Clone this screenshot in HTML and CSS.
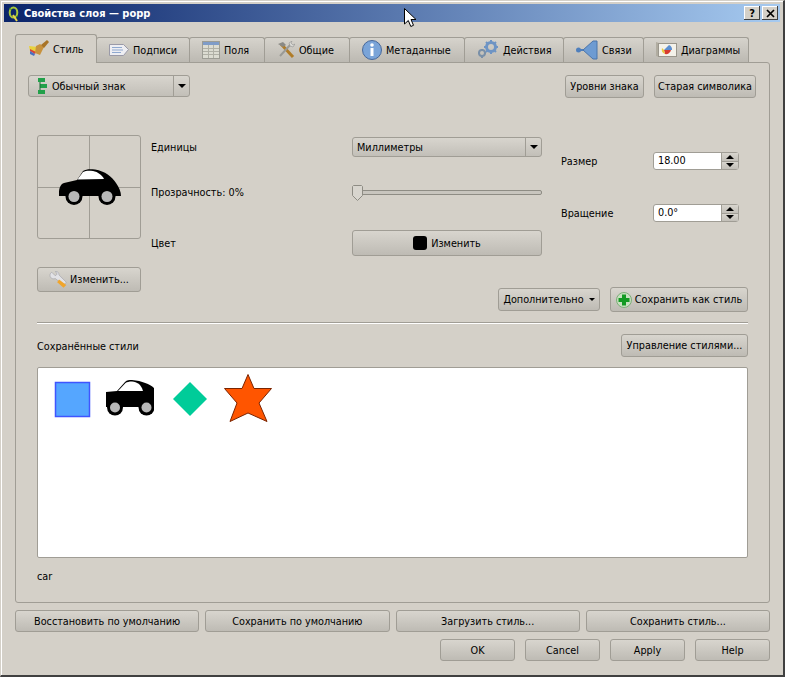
FILE: index.html
```html
<!DOCTYPE html>
<html lang="ru">
<head>
<meta charset="utf-8">
<title>Свойства слоя — popp</title>
<link rel="stylesheet" href="styles.css">
</head>
<body>
<svg class="defs" width="0" height="0">
  <symbol id="car" viewBox="0 0 62 36" preserveAspectRatio="none">
    <path d="M0 27C-.5 21 1 15 5 14L18 11L24 2C27 0 31 0 36 .5C46 2 53 8 57 14C60 18 62 23 62 27Z" fill="#000"/>
    <path d="M18.500 10.500L24 3C27 1.500 30 1.500 34 2C39 3 43 6 45 10Z" fill="#fff"/>
    <circle cx="15" cy="27.500" r="8.500" fill="#000"/><circle cx="15" cy="27.500" r="5.500" fill="#b8b8b8"/>
    <circle cx="48" cy="27.500" r="8.500" fill="#000"/><circle cx="48" cy="27.500" r="5.500" fill="#b8b8b8"/>
  </symbol>
  <symbol id="car-small" viewBox="0 0 48 36">
    <path d="M0 12L11 11L19 2C21 0 23 0 26 0C36 1 44 4 48 8L48 27L0 27Z" fill="#000"/>
    <path d="M12 11L19.500 3C21 2 23 1.500 26 1.500C31 2 35 4 37 11Z" fill="#fff"/>
    <circle cx="9" cy="27.500" r="8" fill="#000"/><circle cx="9" cy="27.500" r="5" fill="#b8b8b8"/>
    <circle cx="40.500" cy="27.500" r="8" fill="#000"/><circle cx="40.500" cy="27.500" r="5" fill="#b8b8b8"/>
  </symbol>
</svg>
<div class="window">
  <header class="titlebar">
    <svg class="logo" width="11" height="17" viewBox="0 0 11 17"><ellipse cx="5.500" cy="7.500" rx="3.800" ry="5" fill="none" stroke="#a8c83c" stroke-width="2"/><path d="M5 10l4 6" stroke="#e8d44a" stroke-width="2"/><path d="M1 3l3 2M8 12l2-1" stroke="#2f7d2a"/></svg>
    <span class="title">Свойства слоя — popp</span>
    <span class="winbtns">
      <span class="winbtn">?</span>
      <span class="winbtn">
        <svg width="9" height="9" viewBox="0 0 9 9"><path d="M1 1l7 7M8 1l-7 7" stroke="#000" stroke-width="1.7"/></svg>
      </span>
    </span>
  </header>

  <nav class="tabs">
    <div class="tab active">
      <svg class="ti" width="20" height="18" viewBox="0 0 20 18"><path d="M0 6l9 1-2 6-6-2z" fill="#e8d23c"/><path d="M1 9l6 3-1 2-5-3z" fill="#d8433a"/><path d="M1 11l5 3-1 2-4-2z" fill="#4a6fc0"/><path d="M7 6l4-2 4 3-4 8-5-2z" fill="#c8923e"/><path d="M12 5l6-5 2 2-5 6z" fill="#a87428"/></svg>
      <span>Стиль</span>
    </div>
    <div class="tab">
      <svg class="ti" width="20" height="14" viewBox="0 0 20 14"><path d="M.5 1.500h14l5 5-5 6H.5z" fill="#eeeef2" stroke="#9a9aa8"/><path d="M3 4.500h10M3 7h11M3 9.500h9" stroke="#8fa9d0"/></svg>
      <span>Подписи</span>
    </div>
    <div class="tab">
      <svg class="ti" width="18" height="18" viewBox="0 0 18 18"><rect x=".5" y=".5" width="17" height="17" fill="#dcdcd2" stroke="#9c9c94"/><rect x="1" y="1" width="16" height="3" fill="#7f9cc8"/><path d="M1 7.500h16M1 10.500h16M1 13.500h16M6.500 4v13M11.500 4v13" stroke="#b0b0a6"/></svg>
      <span>Поля</span>
    </div>
    <div class="tab">
      <svg class="ti" width="18" height="18" viewBox="0 0 18 18"><path d="M4 3l12 13" stroke="#b07c28" stroke-width="3"/><path d="M14 3L3 15" stroke="#9a9a96" stroke-width="2"/><path d="M1 3l5-2 3 3-3 2z" fill="#8a8a86"/><path d="M12 2l3-2-1 2 2 2 2-1-2 3-3-1z" fill="#d8d8d4" stroke="#888" stroke-width=".5"/></svg>
      <span>Общие</span>
    </div>
    <div class="tab">
      <svg class="ti" width="20" height="20" viewBox="0 0 20 20"><circle cx="10" cy="10" r="9.500" fill="#7aa4d8" stroke="#48689a"/><circle cx="10" cy="5" r="1.800" fill="#fff"/><path d="M8.500 8h3v8h-3z" fill="#fff"/></svg>
      <span>Метаданные</span>
    </div>
    <div class="tab">
      <svg class="ti" width="22" height="20" viewBox="0 0 22 20"><circle cx="14" cy="7" r="4.500" fill="none" stroke="#6e94c4" stroke-width="3"/><path d="M14 0v3M14 11v3M7 7h3M18 7h3M9 2l2 2M17 10l2 2M19 2l-2 2M11 10l-2 2" stroke="#6e94c4" stroke-width="2"/><circle cx="5" cy="13" r="3" fill="none" stroke="#7a90a8" stroke-width="2"/><path d="M5 9v1M5 16v2M1 13h1M8 13h1" stroke="#7a90a8" stroke-width="2"/></svg>
      <span>Действия</span>
    </div>
    <div class="tab">
      <svg class="ti" width="22" height="20" viewBox="0 0 22 20"><circle cx="2.500" cy="10" r="2.500" fill="#4f7fbc"/><path d="M4 9h6v2H4z" fill="#4f7fbc"/><path d="M7 10L17 1h4v18h-4z" fill="#6d9bd2" stroke="#4a74aa"/></svg>
      <span>Связи</span>
    </div>
    <div class="tab">
      <svg class="ti" width="21" height="16" viewBox="0 0 21 16"><path d="M0 0l3 1v14l-3-1z" fill="#b0aca0"/><rect x="2.500" y="1.500" width="18" height="13" fill="#f4f2ea" stroke="#9a968c"/><path d="M8 8l5-5a5 5 0 0 1 3 5z" fill="#5c8fd0"/><path d="M8 8h7a5 5 0 0 1-6 4z" fill="#d83a2e"/><path d="M8 8l1 4a5 5 0 0 1-3-6z" fill="#e8c93c"/></svg>
      <span>Диаграммы</span>
    </div>
  </nav>

  <main class="pane">
    <div class="toprow">
      <div class="combo combo-type">
        <span class="combo-text">
          <svg class="ci" width="10" height="16" viewBox="0 0 10 16"><rect x="1" y="0" width="7" height="4" fill="#22a04a"/><rect x="3" y="6" width="7" height="4" fill="#22a04a"/><rect x="1" y="12" width="7" height="4" fill="#22a04a"/><path d="M3 4v8" fill="none" stroke="#1a6a34"/></svg>
          Обычный знак
        </span>
        <span class="combo-arrow"><i class="down"></i></span>
      </div>
      <div class="top-actions">
        <button class="btn btn-levels">Уровни знака</button>
        <button class="btn btn-old">Старая символика</button>
      </div>
    </div>

    <section class="symbol">
      <div class="symbol-left">
        <div class="preview">
          <svg class="preview-car"><use href="#car"/></svg>
        </div>
        <button class="btn btn-edit">
          <svg width="20" height="17" viewBox="0 0 22 18"><path d="M3 1a4 4 0 0 0-1 6c2 2 4 1 5 1l9 7 3-3-8-8c0-2-1-4-4-4l2 3-2 2z" fill="#e2e2e6" stroke="#9a9aa2" stroke-width=".6"/><path d="M11 9l8 6-3 3-7-6z" fill="#f0a52c"/></svg>
          Изменить...
        </button>
      </div>
      <div class="symbol-right">
        <div class="symbol-props">
          <div class="props-main">
            <span class="lbl">Единицы</span>
            <div class="combo combo-units">
              <span class="combo-text">Миллиметры</span>
              <span class="combo-arrow"><i class="down"></i></span>
            </div>
            <span class="lbl">Прозрачность: 0%</span>
            <div class="slider">
              <svg class="thumb" width="11" height="16" viewBox="0 0 11 16"><path d="M1.500.5h8l1 1v9l-5 5-5-5v-9z" fill="#d8d5ce" stroke="#8e8c84"/></svg>
            </div>
            <span class="lbl lbl-color">Цвет</span>
            <button class="btn btn-color"><i class="swatch"></i>Изменить</button>
          </div>
          <div class="props-side">
            <span class="lbl">Размер</span>
            <div class="spin">
              <span class="spin-val">18.00</span>
              <span class="spin-btns"><span class="spin-part"><i class="up"></i></span><span class="spin-part"><i class="down"></i></span></span>
            </div>
            <span class="lbl">Вращение</span>
            <div class="spin">
              <span class="spin-val">0.0°</span>
              <span class="spin-btns"><span class="spin-part"><i class="up"></i></span><span class="spin-part"><i class="down"></i></span></span>
            </div>
          </div>
        </div>
        <div class="symbol-actions">
          <button class="btn btn-more">Дополнительно<i class="down small"></i></button>
          <button class="btn btn-save">
            <svg width="16" height="16" viewBox="0 0 16 16"><circle cx="8" cy="8" r="7.500" fill="#c8e0c0" stroke="#7cae78"/><path d="M6 2.500h4V6h3.500v4H10v3.500H6V10H2.500V6H6z" fill="#129a22"/></svg>
            Сохранить как стиль
          </button>
        </div>
      </div>
    </section>

    <hr class="sep">

    <div class="saved-head">
      <span class="saved-title">Сохранённые стили</span>
      <button class="btn btn-manage">Управление стилями...</button>
    </div>

    <div class="list">
      <svg class="cell" viewBox="0 0 48 48"><rect x="7.500" y="8.500" width="34" height="34" fill="#55a6ff" stroke="#3f55ff" stroke-width="1.500"/></svg>
      <svg class="cell"><use href="#car-small" y="6" width="48" height="36"/></svg>
      <svg class="cell" viewBox="0 0 48 48"><path d="M26 8l17 17-17 17L9 25z" fill="#00cc99"/></svg>
      <svg class="cell cell-star" viewBox="0 0 48 48"><path d="M24 .5L30 14.500H47.500L35 29L43 47.500L24 39L6 47.500L13 29L.5 14.500H18Z" fill="#ff5500" stroke="#7a2400"/></svg>
    </div>

    <div class="caption">car</div>
  </main>

  <div class="btnrow btnrow-wide">
    <button class="btn">Восстановить по умолчанию</button>
    <button class="btn">Сохранить по умолчанию</button>
    <button class="btn">Загрузить стиль...</button>
    <button class="btn">Сохранить стиль...</button>
  </div>
  <div class="btnrow btnrow-dialog">
    <button class="btn">OK</button>
    <button class="btn">Cancel</button>
    <button class="btn">Apply</button>
    <button class="btn">Help</button>
  </div>
</div>
<svg class="cursor" width="13" height="20" viewBox="0 0 13 20"><path d="M.5.500v15.500l3.800-3.500 2.500 6 2.700-1.200-2.500-5.800h5z" fill="#fff" stroke="#000"/></svg>
</body>
</html>
```
FILE: styles.css
```css
* { box-sizing: border-box; }
html, body { margin: 0; padding: 0; }
body {
  width: 785px;
  height: 677px;
  overflow: hidden;
  position: relative;
  background: #d4d0c8;
  font-family: "DejaVu Sans Condensed", "DejaVu Sans", sans-serif;
  font-stretch: condensed;
  font-size: 10.75px;
  color: #000;
}
.defs { position: absolute; }
.window {
  height: 677px;
  padding: 3px 3px 0 4px;
  background: #d4d0c8;
  border-top: 1px solid #d4d0c8;
  border-left: 1px solid #d4d0c8;
  box-shadow: inset 1px 1px 0 #fff;
  border-bottom: 2px solid #404040;
  border-right: 2px solid #404040;
}
.titlebar {
  height: 18px;
  margin-left: -1px;
  display: flex;
  align-items: center;
  background: linear-gradient(90deg, #0a246a, #a6caf0);
  color: #fff;
  font-weight: bold;
  font-size: 11px;
  padding-left: 4px;
}
.logo { margin-right: 5px; margin-top: 1px; }
.title { flex: 1; }
.winbtns { display: flex; gap: 2px; margin-right: 2px; }
.winbtn {
  width: 16px;
  height: 14px;
  background: #d4d0c8;
  color: #000;
  display: flex;
  align-items: center;
  justify-content: center;
  font-size: 11px;
  font-weight: bold;
  box-shadow: inset -1px -1px 0 #404040, inset 1px 1px 0 #fff;
}
.tabs {
  display: grid;
  grid-template-columns: 81px 93px 75px 85px 115px 99px 80px 105px;
  width: max-content;
  margin: 12px 0 0 11px;
  height: 28px;
  align-items: end;
  position: relative;
  z-index: 1;
}
.tab {
  height: 25px;
  display: flex;
  align-items: center;
  gap: 4px;
  padding-left: 12px;
  margin-left: -1px;
  border: 1px solid #a09d95;
  border-bottom: 0;
  border-radius: 3px 3px 0 0;
  background: linear-gradient(#d6d3cc, #bcb9b2);
  white-space: nowrap;
}
.tab.active {
  height: 29px;
  background: #d4d0c8;
  padding-left: 13px;
  margin-bottom: -1px;
}
.ti { flex: none; }
.pane {
  width: 755px;
  height: 541px;
  margin-left: 10px;
  padding: 12px 13px 0 12px;
  border: 1px solid #a09d95;
  border-radius: 0 3px 3px 3px;
}
.btn {
  font: inherit;
  color: #000;
  border: 1px solid #a09d95;
  border-radius: 3px;
  background: linear-gradient(#d8d5ce, #bebbb4);
  padding: 0;
  display: flex;
  align-items: center;
  justify-content: center;
  white-space: nowrap;
}
.toprow { display: flex; justify-content: space-between; align-items: flex-start; }
.top-actions { display: flex; gap: 10px; }
.btn-levels { width: 79px; height: 23px; }
.btn-old { width: 102px; height: 23px; }
.combo {
  display: flex;
  border: 1px solid #a09d95;
  border-radius: 3px;
  background: linear-gradient(#d8d5ce, #c2bfb8);
  height: 21px;
}
.combo-text { flex: 1; display: flex; align-items: center; padding-left: 4px; }
.combo-arrow {
  width: 16px;
  border-left: 1px solid #a09d95;
  display: flex;
  align-items: center;
  justify-content: center;
}
.combo-type { width: 162px; height: 22px; }
.combo-type .combo-text { padding-left: 8px; }
.ci { margin-right: 5px; }
.combo-units { width: 190px; height: 20px; }
.up, .down {
  display: block;
  width: 0;
  height: 0;
  border-left: 4px solid transparent;
  border-right: 4px solid transparent;
}
.down { border-top: 4px solid #000; }
.up { border-bottom: 4px solid #000; }
.symbol { display: flex; margin: 37px 8px 0 9px; }
.symbol-left { width: 104px; flex: none; }
.preview {
  height: 104px;
  border: 1px solid #a09d95;
  border-radius: 3px;
  padding-left: 2px;
  display: flex;
  align-items: center;
  justify-content: center;
  background:
    linear-gradient(#a09d95, #a09d95) center / 100% 1px no-repeat,
    linear-gradient(#a09d95, #a09d95) center / 1px 100% no-repeat;
}
.preview-car { width: 62px; height: 36px; }
.btn-edit { width: 104px; height: 25px; margin-top: 28px; gap: 1px; }
.symbol-right { flex: 1; padding-left: 10px; }
.symbol-props { display: flex; justify-content: space-between; padding-right: 9px; height: 121px; }
.props-main {
  width: 391px;
  display: grid;
  grid-template-columns: 201px 190px;
  grid-template-rows: 45px 48px 26px;
  padding-top: 2px;
  align-items: start;
}
.lbl { line-height: 20px; display: block; padding-top: 1px; }
.lbl-color { line-height: 26px; }
.slider {
  height: 20px;
  position: relative;
  display: flex;
  align-items: center;
}
.slider::before {
  content: "";
  display: block;
  width: 100%;
  height: 3px;
  border: 1px solid #8e8c84;
  border-radius: 2px;
  background: #c8c5be;
}
.thumb { position: absolute; left: 0; top: 3px; }
.btn-color { width: 190px; height: 26px; gap: 4px; }
.swatch { width: 14px; height: 14px; background: #000; border-radius: 3px; display: block; }
.props-side {
  width: 178px;
  display: grid;
  grid-template-columns: 92px 86px;
  grid-template-rows: 18px 18px;
  row-gap: 34px;
  padding-top: 17px;
  align-items: center;
  align-content: start;
}
.props-side .lbl { padding-top: 2px; }
.spin {
  height: 18px;
  display: flex;
  border: 1px solid #a09d95;
  border-radius: 3px;
  background: #fff;
}
.spin-val { flex: 1; padding-left: 4px; line-height: 16px; }
.spin-btns {
  width: 17px;
  display: flex;
  flex-direction: column;
  background: #d4d0c8;
  border-left: 1px solid #a09d95;
}
.spin-part {
  flex: 1;
  display: flex;
  align-items: center;
  justify-content: center;
  background: linear-gradient(#d8d5ce, #c2bfb8);
}
.spin-part + .spin-part { border-top: 1px solid #a09d95; }
.symbol-actions { display: flex; justify-content: flex-end; align-items: center; gap: 10px; margin-top: 31px; }
.btn-more { width: 102px; height: 23px; gap: 5px; }
.small { border-left-width: 3px; border-right-width: 3px; border-top-width: 3px; }
.btn-save { width: 138px; height: 25px; gap: 3px; }
.sep {
  height: 2px;
  margin: 10px 8px 0 9px;
  border: 0;
  background: linear-gradient(#a09d95 50%, #fff 50%);
}
.saved-head {
  display: flex;
  justify-content: space-between;
  align-items: center;
  margin: 10px 8px 0 9px;
}
.saved-title { padding-top: 2px; }
.btn-manage { width: 127px; height: 23px; }
.list {
  height: 191px;
  margin: 10px 8px 0 9px;
  background: #fff;
  border: 1px solid #a09d95;
  border-radius: 2px;
  padding: 6px 0 0 10px;
  display: flex;
  gap: 10px;
  align-items: flex-start;
}
.cell { width: 48px; height: 48px; flex: none; }
.cell-star { margin-left: 2px; }
.caption { margin: 11px 0 0 9px; line-height: 16px; }
.btnrow { display: flex; gap: 6px; margin-left: 10px; width: 755px; }
.btnrow .btn { height: 22px; }
.btnrow-wide { margin-top: 7px; }
.btnrow-wide .btn { flex: 1; }
.btnrow-dialog { margin-top: 7px; justify-content: flex-end; gap: 10px; }
.btnrow-dialog .btn { width: 75px; }
.cursor { position: absolute; left: 404px; top: 8px; }
```
